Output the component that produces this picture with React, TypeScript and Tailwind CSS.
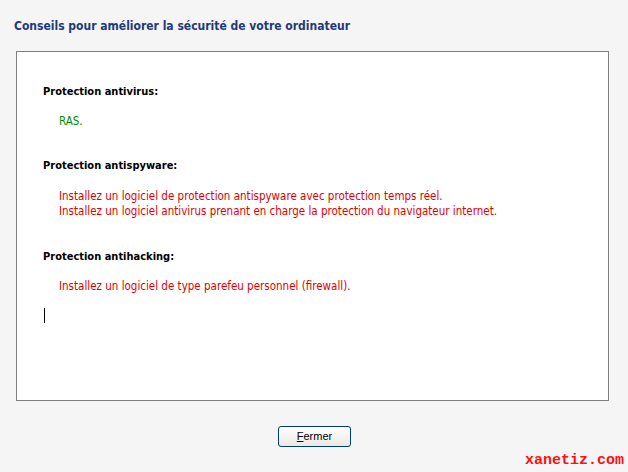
export default function App() {
  return (
    <div className="w-[628px] h-[472px] bg-[#f5f5f5] flex flex-col font-['DejaVu_Sans_Condensed','DejaVu_Sans',sans-serif] text-[11px] overflow-hidden">
      {/* Titre */}
      <div className="h-[16px] mt-[18px] ml-[14px] leading-[16px] text-[12px] font-bold text-[#1f3a7a]">
        Conseils pour améliorer la sécurité de votre ordinateur
      </div>

      {/* Zone de texte */}
      <div className="mt-[17px] ml-[16px] w-[593px] h-[350px] border border-[#808080] bg-white pl-[26px] pt-[32px]">
        <div className="h-[15px] leading-[15px] font-bold text-black">Protection antivirus:</div>
        <div className="mt-[15px] ml-[16px] h-[15px] leading-[15px] text-[11.5px] text-[#009000]">RAS.</div>

        <div className="mt-[29px] h-[15px] leading-[15px] font-bold text-black">Protection antispyware:</div>
        <div className="mt-[16px] ml-[16px] leading-[15px] text-[11.5px] text-[#e00000]">
          <div>Installez un logiciel de protection antispyware avec protection temps réel.</div>
          <div>Installez un logiciel antivirus prenant en charge la protection du navigateur internet.</div>
        </div>

        <div className="mt-[30px] h-[15px] leading-[15px] font-bold text-black">Protection antihacking:</div>
        <div className="mt-[15px] ml-[16px] h-[15px] leading-[15px] text-[11.5px] text-[#e00000]">
          Installez un logiciel de type parefeu personnel (firewall).
        </div>

        <div className="mt-[14px] ml-[1px] w-[1px] h-[15px] bg-black" />
      </div>

      {/* Bouton */}
      <div className="mt-[25px] ml-[278px]">
        <button className="w-[73px] h-[21px] rounded-[3px] border border-[#003c74] bg-gradient-to-b from-white to-[#ece9e0] font-['Liberation_Sans',sans-serif] text-[11px] text-black leading-[19px]">
          <span className="underline">F</span>ermer
        </button>
      </div>

      {/* Filigrane */}
      <div className="mt-[6px] self-end mr-[4px] font-['Liberation_Mono',monospace] font-bold text-[15px] leading-[16px] text-[#ff1010]">
        xanetiz.com
      </div>
    </div>
  );
}
